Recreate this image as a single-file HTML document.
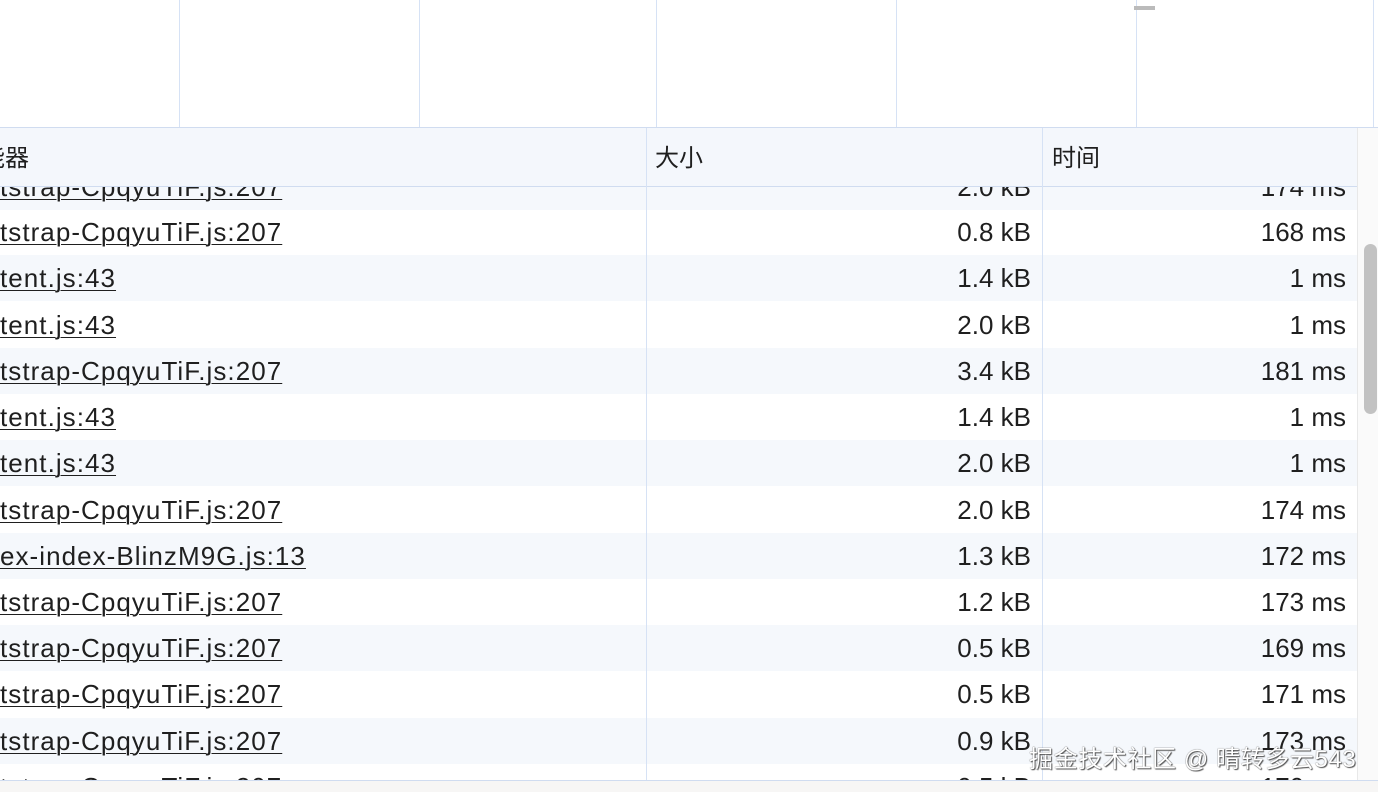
<!DOCTYPE html>
<html><head><meta charset="utf-8"><style>
*{margin:0;padding:0;box-sizing:border-box}
body{width:1378px;height:792px;overflow:hidden;background:#fff;font-family:"Liberation Sans","Noto Sans CJK SC",sans-serif;color:#1f1f1f;position:relative}
.v{position:absolute;top:0;height:127px;width:1px;background:#d6e2f5}
.h{position:absolute;left:0;width:1378px;height:1px;background:#d0dcf0}
.hdr{position:absolute;top:128px;left:0;width:1357px;height:58px;background:#f4f7fc;font-size:24px}
.hdr span{position:absolute;top:10px}
.body{position:absolute;top:187px;left:0;width:1357px;height:593px;overflow:hidden}
.row{position:absolute;left:0;width:1357px;height:46px;font-size:26px;line-height:46px}
.row.s{background:#f5f8fc}
.a{position:absolute;left:0;text-decoration:underline;text-decoration-thickness:1px;text-underline-offset:3px;white-space:nowrap;letter-spacing:1.05px}
.b{position:absolute;right:326px;text-align:right}
.c{position:absolute;right:11px;text-align:right}
.col{position:absolute;width:1px;background:#d6e2f5}
</style></head><body>
<div class="v" style="left:179px"></div>
<div class="v" style="left:419px"></div>
<div class="v" style="left:656px"></div>
<div class="v" style="left:896px"></div>
<div class="v" style="left:1136px"></div>
<div class="v" style="left:1373px"></div>
<div style="position:absolute;left:1134px;top:6px;width:21px;height:4px;background:#bbb"></div>
<div class="h" style="top:127px"></div>
<div class="hdr"><span style="left:-19px">能器</span><span style="left:655px">大小</span><span style="left:1052px">时间</span></div>
<div class="h" style="top:186px;width:1357px"></div>
<div class="body">
<div class="row s" style="top:-23px"><span class="a">tstrap-CpqyuTiF.js:207</span><span class="b">2.0 kB</span><span class="c">174 ms</span></div>
<div class="row" style="top:22px"><span class="a">tstrap-CpqyuTiF.js:207</span><span class="b">0.8 kB</span><span class="c">168 ms</span></div>
<div class="row s" style="top:68px"><span class="a">tent.js:43</span><span class="b">1.4 kB</span><span class="c">1 ms</span></div>
<div class="row" style="top:115px"><span class="a">tent.js:43</span><span class="b">2.0 kB</span><span class="c">1 ms</span></div>
<div class="row s" style="top:161px"><span class="a">tstrap-CpqyuTiF.js:207</span><span class="b">3.4 kB</span><span class="c">181 ms</span></div>
<div class="row" style="top:207px"><span class="a">tent.js:43</span><span class="b">1.4 kB</span><span class="c">1 ms</span></div>
<div class="row s" style="top:253px"><span class="a">tent.js:43</span><span class="b">2.0 kB</span><span class="c">1 ms</span></div>
<div class="row" style="top:300px"><span class="a">tstrap-CpqyuTiF.js:207</span><span class="b">2.0 kB</span><span class="c">174 ms</span></div>
<div class="row s" style="top:346px"><span class="a">ex-index-BlinzM9G.js:13</span><span class="b">1.3 kB</span><span class="c">172 ms</span></div>
<div class="row" style="top:392px"><span class="a">tstrap-CpqyuTiF.js:207</span><span class="b">1.2 kB</span><span class="c">173 ms</span></div>
<div class="row s" style="top:438px"><span class="a">tstrap-CpqyuTiF.js:207</span><span class="b">0.5 kB</span><span class="c">169 ms</span></div>
<div class="row" style="top:484px"><span class="a">tstrap-CpqyuTiF.js:207</span><span class="b">0.5 kB</span><span class="c">171 ms</span></div>
<div class="row s" style="top:531px"><span class="a">tstrap-CpqyuTiF.js:207</span><span class="b">0.9 kB</span><span class="c">173 ms</span></div>
<div class="row" style="top:577px"><span class="a">tstrap-CpqyuTiF.js:207</span><span class="b">0.5 kB</span><span class="c">170 ms</span></div>
</div>
<div class="col" style="left:646px;top:128px;height:652px"></div>
<div class="col" style="left:1042px;top:128px;height:652px"></div>
<div style="position:absolute;left:1357px;top:128px;width:21px;height:652px;background:#fafafa;border-left:1px solid #e8e8e8"></div>
<div style="position:absolute;left:1364px;top:244px;width:13px;height:170px;background:#c2c2c2;border-radius:7px"></div>
<div class="h" style="top:780px"></div>
<div style="position:absolute;top:781px;left:0;width:1378px;height:11px;background:#f7f6f5"></div>
<div style="position:absolute;left:1029px;top:739px;font-size:24px;letter-spacing:0.6px;color:#fff;text-shadow:0 0 1px #333,1px 1px 1px #555;white-space:nowrap">掘金技术社区 @ 晴转多云543</div>
</body></html>
